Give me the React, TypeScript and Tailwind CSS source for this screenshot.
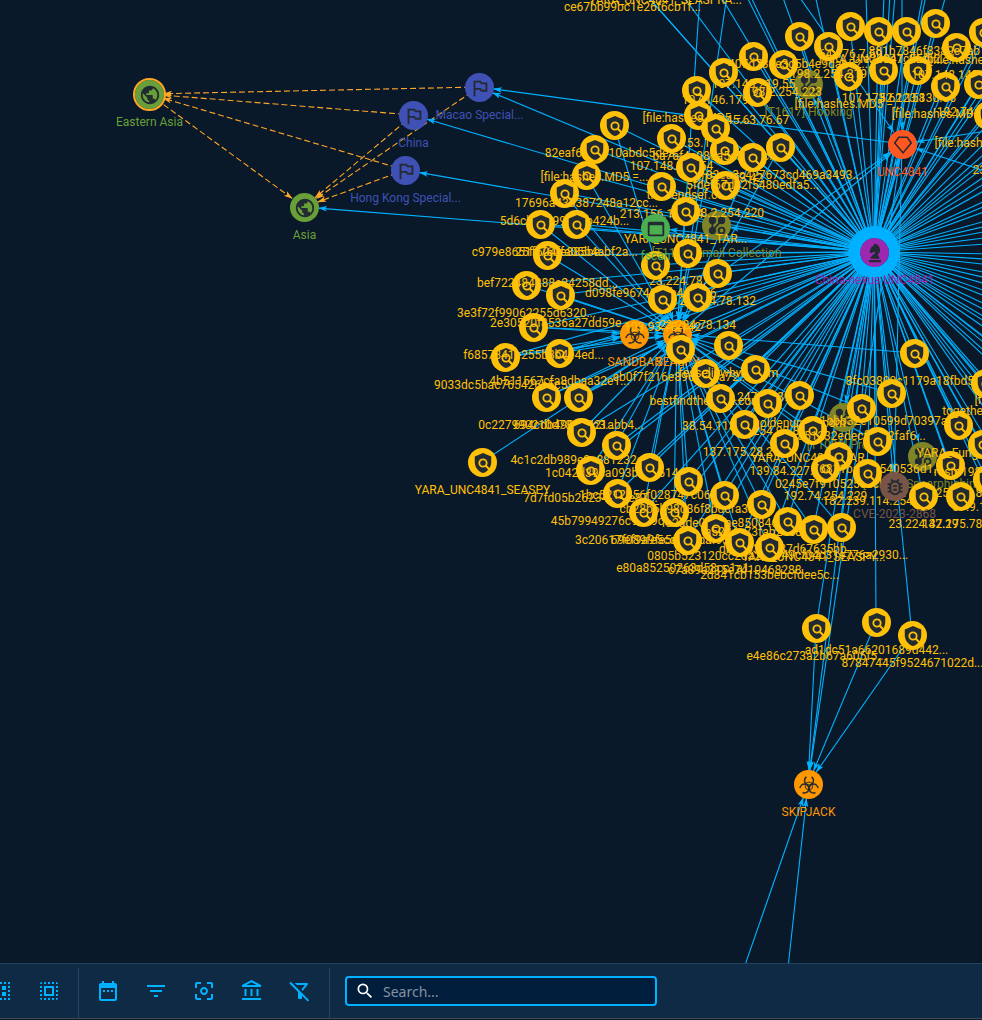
import React from "react";
import {
  MdPublic,
  MdOutlinedFlag,
  MdWebAsset,
  MdOutlineBugReport,
  MdSelectAll,
  MdDateRange,
  MdFilterList,
  MdCenterFocusWeak,
  MdOutlineAccountBalance,
  MdOutlineFilterAltOff,
  MdSearch,
} from "react-icons/md";

type Point = [number, number];
type Kind = "indicator" | "region" | "country" | "malware" | "attack" | "tool" | "vulnerability" | "intrusion" | "campaign";
interface GraphNode {
  x: number;
  y: number;
  label: string;
  kind: Kind;
  selected?: boolean;
}
interface Edge {
  from: Point;
  to: Point;
  dashed?: boolean;
  gap?: number;
}

const HUB: Point = [874, 252];
const UNC: Point = [902, 144];
const SEASPY: Point = [677, 334];
const SANDBAR: Point = [634, 334];
const SKIPJACK: Point = [808, 784];
const EASTERN_ASIA: Point = [149, 94];
const ASIA: Point = [304, 207];
const MACAO: Point = [479, 87];
const CHINA: Point = [413, 115];
const HONG_KONG: Point = [405, 170];
const FSCAN: Point = [655, 228];
const CVE: Point = [894, 486];
const EMAIL: Point = [716, 225];
const HOOKING: Point = [808, 84];
const PROXY: Point = [843, 417];
const SPEARPHISHING: Point = [922, 456];

const nodes: GraphNode[] = [
  { x: 149, y: 94, label: "Eastern Asia", kind: "region", selected: true },
  { x: 304, y: 207, label: "Asia", kind: "region" },
  { x: 479, y: 87, label: "Macao Special...", kind: "country" },
  { x: 413, y: 115, label: "China", kind: "country" },
  { x: 405, y: 170, label: "Hong Kong Special...", kind: "country" },
  { x: 808, y: 84, label: "[T1617] Hooking", kind: "attack" },
  { x: 716, y: 225, label: "[T1114] Email Collection", kind: "attack" },
  { x: 843, y: 417, label: "[T1090] Proxy", kind: "attack" },
  { x: 922, y: 456, label: "[T1566] Spearphishing", kind: "attack" },
  { x: 634, y: 334, label: "SANDBAR", kind: "malware" },
  { x: 677, y: 334, label: "SEASPY", kind: "malware" },
  { x: 808, y: 784, label: "SKIPJACK", kind: "malware" },
  { x: 902, y: 144, label: "UNC4841", kind: "intrusion" },
  { x: 874, y: 252, label: "China-nexus UNC4841", kind: "campaign" },
];

const indicators: [number, number, string][] = [
  [632, -21, "ce67bb99bc1e26f6cb1f..."],
  [665, -28, "YARA_UNC4841_SEASPRA..."],
  [614, 125, "82eaf69de710abdc5dea..."],
  [564, 193, "5d6cb1ac99a57b424b..."],
  [586, 175, "17696a433387248a12cc..."],
  [594, 149, "[file:hashes.MD5 =..."],
  [526, 285, "3e3f72f99062255d6320..."],
  [547, 255, "bef722484288e24258dd..."],
  [540, 224, "c979e8651f604fe885be..."],
  [576, 224, "25f4760fa05b4abf2a..."],
  [505, 357, "9033dc5bac765426b5c5..."],
  [559, 353, "4b511567cfa8dbaa32e1..."],
  [533, 327, "f6857841e255b3b4e4ed..."],
  [560, 295, "2e30520f8536a27dd59e..."],
  [546, 397, "0c227990210d78476c3..."],
  [578, 397, "694cdb49875421abb4..."],
  [581, 432, "4c1c2db989e0e881232c..."],
  [482, 462, "YARA_UNC4841_SEASPY"],
  [590, 470, "7d7fd05b262342a9e87..."],
  [616, 445, "1c042d39ca093b0e7614..."],
  [617, 493, "45b79949276c9cb9cf5..."],
  [649, 467, "1bc5212856f028747c06..."],
  [643, 512, "3c20617f089fe5cc09ba..."],
  [674, 512, "69ef9a9fe5cd09baf93..."],
  [688, 481, "cb28b5b98d86f8bdcfa3..."],
  [687, 540, "e80a85250263d58cc1a1..."],
  [724, 495, "fa2ade0ee2ae850846..."],
  [715, 528, "0805b523120cc2da2a0..."],
  [761, 504, "a5224e73fab21c8d..."],
  [787, 521, "db51b3c7637d67635bb..."],
  [813, 529, "YARA_UNC4841_SEASPY..."],
  [841, 527, "949cf04c31e776a2930..."],
  [739, 542, "c7a89a215e7410468288..."],
  [769, 547, "2d841cb153bebcfdee5c..."],
  [698, 115, "175.53.1.147"],
  [696, 90, "[file:hashes.MD5 =..."],
  [723, 72, "107.146.179.84"],
  [724, 150, "45.154.253.42"],
  [715, 128, "ba7af4a98da5e5e34c..."],
  [671, 138, "107.148.219.54"],
  [757, 92, "45.63.76.67"],
  [753, 56, "107.148.219.55"],
  [783, 64, "198.2.254.223"],
  [799, 36, "407d738e3c5b4e9dab52..."],
  [848, 76, "[file:hashes.MD5 =..."],
  [828, 46, "198.2.254.219"],
  [850, 26, "64.176.7.59"],
  [883, 70, "107.173.62.158"],
  [917, 70, "52.123.130.86"],
  [878, 31, "YARA_UNC4841_SEA..."],
  [906, 31, "e238a7c56fb2..."],
  [945, 86, "[file:hashes.MD5 =..."],
  [956, 47, "107.148.149.156"],
  [935, 23, "881b7846f8389c7ab1c..."],
  [983, 32, "[file:hashes.MD5 =..."],
  [978, 84, "192.74.254.218"],
  [988, 115, "[file:hashes.MD5 =..."],
  [1007, 142, "23.224.42.30"],
  [690, 167, "thetrendsef.com"],
  [725, 185, "198.2.254.220"],
  [752, 157, "5fdef67d82f5480edfa5..."],
  [780, 147, "182ea3c427673cd469a3493..."],
  [661, 186, "213.156.153.34"],
  [685, 211, "YARA_UNC4841_TAR..."],
  [655, 265, "d098fe96746b6b4cb406..."],
  [687, 253, "23.224.78.130"],
  [662, 299, "103.93.78.142"],
  [717, 273, "23.224.78.132"],
  [697, 297, "23.224.78.134"],
  [680, 349, "cb0f7f216e8965f40a72..."],
  [705, 373, "bestfindthetruth.com"],
  [728, 345, "fesseliewbwo.com"],
  [755, 369, "89.247.68.89"],
  [720, 398, "38.54.113.205"],
  [799, 395, "goldenunder.com"],
  [767, 403, "192.254.92.86"],
  [744, 424, "137.175.28.251"],
  [784, 443, "139.84.227.9"],
  [812, 430, "YARA_UNC4841_TAR..."],
  [838, 456, "0245e7f9105253ecb4..."],
  [825, 468, "192.74.254.229"],
  [914, 353, "8fc03800c1179a18fbd5..."],
  [861, 408, "a51232edecf5182faf6..."],
  [891, 393, "1bbb32e10599d70397ae..."],
  [877, 441, "76811ba036540536d1..."],
  [867, 473, "182.239.114.254"],
  [950, 465, "27.125.175.86"],
  [958, 425, "YARA_Fungus..."],
  [985, 383, "togetheroff.com"],
  [1028, 372, "[file:hashes.MD5 =..."],
  [982, 444, "resto198.2.254.22"],
  [987, 479, "37.9.112.175"],
  [923, 496, "23.224.42.29"],
  [960, 496, "137.175.78.66"],
  [816, 628, "e4e86c273a2b67a605f5..."],
  [876, 622, "ad1dc51a66201689d442..."],
  [912, 635, "87847445f9524671022d..."],
];

indicators.forEach(([x, y, label]) => nodes.push({ x, y, label, kind: "indicator" }));
nodes.push({ x: 655, y: 228, label: "fscan", kind: "tool" });
nodes.push({ x: 894, y: 486, label: "CVE-2023-2868", kind: "vulnerability" });

const distant: Point[] = [
  [642, -10], [720, -5], [746, -5], [750, -5], [782, -5], [815, -5], [866, -5], [884, -5], [890, -5], [895, -5], [923, -5], [926, -5],
  [946, -5], [1000, 8], [1000, 50], [1000, 62], [1000, 72], [1000, 96], [1000, 110], [1000, 128], [1000, 140], [1000, 155], [1000, 166],
  [1000, 174], [1000, 182], [1000, 194], [1000, 200], [1000, 206], [1000, 217], [1000, 223], [1000, 229], [1000, 236], [1000, 243],
  [1000, 254], [1000, 260], [1000, 266], [1000, 275], [1000, 281], [1000, 288], [1000, 296], [1000, 302], [1000, 311], [1000, 318],
  [1000, 326], [1000, 331], [1000, 338], [1000, 349], [1000, 356], [1000, 365], [1000, 371], [1000, 396], [1000, 403], [1000, 412],
  [1000, 421], [1000, 430], [1000, 462], [1000, 478], [1000, 515],
];

const edges: Edge[] = [
  { from: MACAO, to: EASTERN_ASIA, dashed: true },
  { from: CHINA, to: EASTERN_ASIA, dashed: true },
  { from: HONG_KONG, to: EASTERN_ASIA, dashed: true },
  { from: EASTERN_ASIA, to: ASIA, dashed: true },
  { from: MACAO, to: ASIA, dashed: true },
  { from: CHINA, to: ASIA, dashed: true },
  { from: HONG_KONG, to: ASIA, dashed: true },
  { from: UNC, to: MACAO },
  ...[MACAO, CHINA, HONG_KONG, ASIA, FSCAN, CVE, EMAIL, HOOKING, PROXY, SPEARPHISHING, SKIPJACK, SEASPY, SANDBAR, UNC].map(
    (to): Edge => ({ from: HUB, to })
  ),
  { from: UNC, to: SKIPJACK },
  { from: UNC, to: CVE },
  { from: SEASPY, to: UNC },
  { from: SANDBAR, to: UNC },
  { from: [798, -5], to: UNC },
  { from: [902, -5], to: UNC },
  { from: [1000, 129], to: UNC },
  { from: [1000, 176], to: UNC },
  { from: [700, -5], to: SEASPY },
  { from: [727, -5], to: SEASPY },
  { from: [505, 357], to: SANDBAR },
  { from: [533, 327], to: SANDBAR },
  { from: [559, 353], to: SANDBAR },
  { from: [816, 628], to: SKIPJACK },
  { from: [876, 622], to: SKIPJACK },
  { from: [912, 635], to: SKIPJACK },
  { from: [744, 968], to: SKIPJACK },
  { from: [788, 968], to: SKIPJACK },
  ...distant.map((from): Edge => ({ from, to: HUB, gap: 17 })),
  ...indicators
    .filter(([x, y]) => x !== 482 && y < 1000)
    .map(([x, y]): Edge => ({ from: [x, y], to: HUB, gap: 17 })),
  ...indicators
    .filter(([, y, label]) => y < 600 && y > 120 && (/^[0-9a-f]{8}/.test(label) || label.startsWith("YARA_UNC")))
    .map(([x, y]): Edge => ({ from: [x, y], to: SEASPY })),
];

function Link({ from, to, dashed, gap = 14 }: Edge) {
  const dx = to[0] - from[0];
  const dy = to[1] - from[1];
  const length = Math.hypot(dx, dy) || 1;
  const ux = dx / length;
  const uy = dy / length;
  const tip: Point = [to[0] - ux * gap, to[1] - uy * gap];
  const at = (back: number, side: number) => `${tip[0] - ux * back - uy * side},${tip[1] - uy * back + ux * side}`;
  const head = [at(0, 0), at(9, 2.8), at(7, 0), at(9, -2.8)].join(" ");
  return (
    <g className={dashed ? "fill-[#ffa726] stroke-[#ffa726]" : "fill-[#00b1ff] stroke-[#00b1ff]"}>
      <line
        x1={from[0]}
        y1={from[1]}
        x2={tip[0]}
        y2={tip[1]}
        strokeWidth={1.1}
        strokeDasharray={dashed ? "6 3" : undefined}
      />
      {length > gap + 10 && <polygon points={head} stroke="none" />}
    </g>
  );
}

const circleStyles: Record<Kind, string> = {
  indicator: "bg-[#ffc107]",
  region: "bg-[#689f38]",
  country: "bg-[#3f51b5]",
  malware: "bg-[#ff9800]",
  attack: "bg-[#7f8527]",
  tool: "bg-[#4caf50]",
  vulnerability: "bg-[#795548]",
  intrusion: "bg-[#ff5722]",
  campaign: "bg-[#9c27b0] outline-8 outline-[#00b1ff]",
};

const labelStyles: Record<Kind, string> = {
  indicator: "text-[#ffc107]",
  region: "text-[#689f38]",
  country: "text-[#3f51b5]",
  malware: "text-[#ff9800]",
  attack: "text-[#7f8527]",
  tool: "text-[#4caf50]",
  vulnerability: "text-[#795548]",
  intrusion: "text-[#ff5722]",
  campaign: "text-[#9c27b0]",
};

function ShieldSearch() {
  return (
    <svg viewBox="0 0 24 24" className="size-[22px]" aria-hidden="true">
      <path d="M12 1 3 5v6c0 5.55 3.84 10.74 9 12 5.16-1.26 9-6.45 9-12V5z" className="fill-[#222b31]" />
      <circle cx="12" cy="12" r="4" fill="none" stroke="#ffc107" strokeWidth="2" />
      <path d="m14.8 14.8 4.8 4.8" stroke="#ffc107" strokeWidth="2.2" />
    </svg>
  );
}

function LockPattern() {
  return (
    <svg viewBox="0 0 24 24" className="size-[22px]" fill="none" stroke="currentColor" strokeWidth="2" aria-hidden="true">
      <circle cx="7" cy="6" r="3" fill="currentColor" />
      <circle cx="17" cy="6" r="3" fill="currentColor" />
      <circle cx="7" cy="17" r="3" fill="currentColor" />
      <circle cx="17" cy="17" r="3.2" />
      <path d="M7 6v11L17 6" />
    </svg>
  );
}

function Diamond() {
  return (
    <svg viewBox="0 0 24 24" className="size-[22px]" fill="none" stroke="currentColor" strokeWidth="1.7" aria-hidden="true">
      <path d="M7.4 3.5h9.2L21 9.8 12 20.6 3 9.8z" />
    </svg>
  );
}

function Biohazard() {
  const claw = "M9.2 3.2A4.9 4.9 0 1 0 14.8 3.2";
  return (
    <svg viewBox="0 0 24 24" className="size-[22px]" fill="none" stroke="currentColor" strokeWidth="1.6" aria-hidden="true">
      <path d={claw} />
      <path d={claw} transform="rotate(120 12 13)" />
      <path d={claw} transform="rotate(240 12 13)" />
      <circle cx="12" cy="13" r="4.2" strokeWidth="1" />
    </svg>
  );
}

function ChessKnight() {
  return (
    <svg viewBox="0 0 24 24" className="size-[22px]" fill="currentColor" aria-hidden="true">
      <path d="M5.5 22v-2.4h13V22zM7 18.4h10c-.2-2-1-3.200-2.200-4.600C17.600 12 18 9 17 6.200 16 3.600 13.600 2 11 2l-.6 2.200C8.600 5 7.400 6.400 6.600 8.600L6 11l1.800 1.200 2.600-1.400 1.800-.2c.2 1.400-.6 2.400-2 3.400C8.400 15.200 7.200 16.400 7 18.400z" />
    </svg>
  );
}

function NodeIcon({ kind }: { kind: Kind }) {
  switch (kind) {
    case "indicator":
      return <ShieldSearch />;
    case "region":
      return <MdPublic className="size-[22px]" />;
    case "country":
      return <MdOutlinedFlag className="size-[22px]" />;
    case "malware":
      return <Biohazard />;
    case "attack":
      return <LockPattern />;
    case "tool":
      return <MdWebAsset className="size-[22px]" />;
    case "vulnerability":
      return <MdOutlineBugReport className="size-[22px]" />;
    case "intrusion":
      return <Diamond />;
    case "campaign":
      return <ChessKnight />;
  }
}

function Entity({ node }: { node: GraphNode }) {
  return (
    <div
      className={`absolute -mt-3.5 -ml-3.5 flex size-[29px] items-center justify-center rounded-full text-[#222b31] ${circleStyles[node.kind]} ${
        node.selected ? "outline-2 outline-[#ffa726]" : ""
      }`}
      style={{ left: node.x, top: node.y }}
    >
      <NodeIcon kind={node.kind} />
      <span className={`absolute top-[34px] left-1/2 -translate-x-1/2 text-xs leading-4 whitespace-nowrap ${labelStyles[node.kind]}`}>
        {node.label}
      </span>
    </div>
  );
}

function SelectByType({ className }: { className?: string }) {
  return (
    <svg viewBox="0 0 24 24" className={className} fill="currentColor" aria-hidden="true">
      <path d="M3 3h2v2H3zm4 0h2v2H7zm4 0h2v2h-2zm4 0h2v2h-2zm4 0h2v2h-2zM3 7h2v2H3zm16 0h2v2h-2zM3 11h2v2H3zm16 0h2v2h-2zM3 15h2v2H3zm16 0h2v2h-2zM3 19h2v2H3zm4 0h2v2H7zm4 0h2v2h-2zm4 0h2v2h-2zm4 0h2v2h-2zM7 7h4v4H7zm6 0h4v4h-4zm-6 6h4v4H7zm6 0h4v4h-4z" />
    </svg>
  );
}

function ToolButton({ label, children }: { label: string; children: React.ReactNode }) {
  return (
    <button type="button" aria-label={label} className="flex size-12 shrink-0 items-center justify-center text-[#00b1ff]">
      {children}
    </button>
  );
}

function Divider() {
  return <div className="mx-[5px] mt-1 w-px shrink-0 self-stretch bg-[#27425e]" />;
}

export default function App() {
  return (
    <div className="flex h-screen flex-col bg-[#0a1929] pb-px font-['Roboto',sans-serif]">
      <main className="relative min-h-0 flex-1 overflow-hidden">
        <svg className="absolute inset-0 h-full w-full" aria-hidden="true">
          {edges.map((edge, index) => (
            <Link key={index} {...edge} />
          ))}
        </svg>
        {nodes.map((node, index) => (
          <Entity key={index} node={node} />
        ))}
      </main>
      <footer className="flex h-14 shrink-0 items-center overflow-hidden border-t border-b border-t-[#27425e] border-b-[#3f4a55] bg-[#0f2a45]">
        <div className="-ml-[23px] flex">
          <ToolButton label="Select by type">
            <SelectByType className="size-6" />
          </ToolButton>
          <ToolButton label="Select all">
            <MdSelectAll className="size-6" />
          </ToolButton>
        </div>
        <Divider />
        <div className="flex">
          <ToolButton label="Time range">
            <MdDateRange className="size-6" />
          </ToolButton>
          <ToolButton label="Filter types">
            <MdFilterList className="size-6" />
          </ToolButton>
          <ToolButton label="Filter markings">
            <MdCenterFocusWeak className="size-6" />
          </ToolButton>
          <ToolButton label="Filter authors">
            <MdOutlineAccountBalance className="size-6" />
          </ToolButton>
          <ToolButton label="Clear filters">
            <MdOutlineFilterAltOff className="size-6" />
          </ToolButton>
        </div>
        <Divider />
        <label className="ml-2.5 flex h-[30px] w-[312px] items-center gap-2 rounded border-2 border-[#00b1ff] bg-[#001e3c] px-2 text-white">
          <MdSearch className="size-5 shrink-0" />
          <input
            type="text"
            aria-label="Search"
            placeholder="Search..."
            className="min-w-0 flex-1 bg-transparent pt-0.5 font-['Noto_Sans',sans-serif] text-sm outline-none placeholder:text-[#8592a1]"
          />
        </label>
      </footer>
    </div>
  );
}
